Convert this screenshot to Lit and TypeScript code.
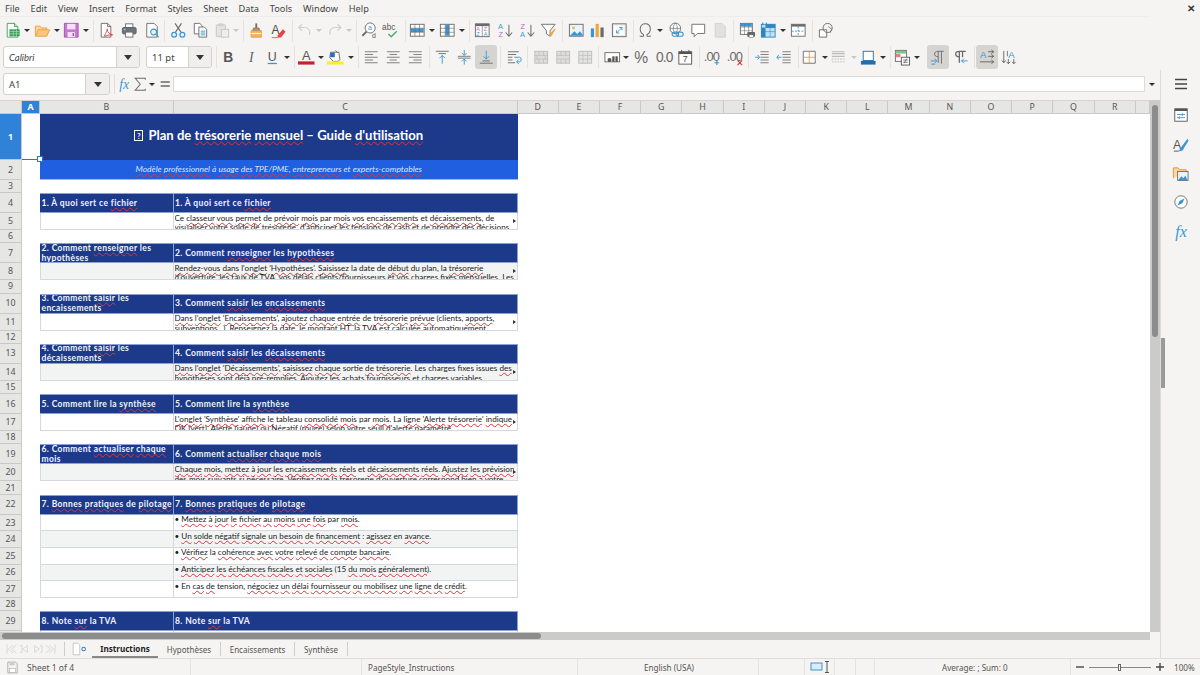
import { LitElement, html, css, svg } from "lit";
import { customElement } from "lit/decorators.js";

const B = "#3a96d6", G = "#6a6a6a", L = "#c4c4c4", O = "#e8923a", R = "#d9342b", P = "#c45fc4";

const I: Record<string, unknown> = {
  new: svg`<path d="M3.500 1.500h8l3.500 3.500v11.500h-11.500z" fill="#fff" stroke="#43a05a"/><path d="M11.500 1.500v3.500h3.500" fill="#cfe8d4" stroke="#43a05a"/><rect x="6" y="8" width="11" height="7.500" fill="#2f9a50"/><path d="M6 10.500h11M6 13h11M10 8v7.500M13.500 8v7.500" stroke="#bfe6c9" stroke-width=".7"/>`,
  open: svg`<path d="M1.500 14.500V4.500h5l1.500 2h6v2" fill="#fbd79c" stroke="#e8a043"/><path d="M1.500 15.500l3-7h12.500l-3 7z" fill="#fcc77b" stroke="#e8a043"/>`,
  save: svg`<path d="M1.500 1.500h15v15h-15z" fill="#c77bd0" stroke="#a94db4"/><rect x="4.500" y="2" width="9" height="6" fill="#f3e2f5"/><rect x="5" y="11" width="8" height="5.500" fill="#f3e2f5"/><rect x="10.500" y="12" width="1.500" height="3.500" fill="#a94db4"/>`,
  pdf: svg`<path d="M3.500 1.500h7l3.500 3.500v11.500h-10.500z" fill="#fff" stroke="${G}"/><path d="M10.500 1.500v3.500h3.500" fill="none" stroke="${G}"/><path d="M7 15.500c2-5 3-6 3-8 0 4 3 6 6 6.500-3 0-6 .5-9 1.500z" fill="none" stroke="${R}" stroke-width=".9"/>`,
  print: svg`<rect x="5" y="2" width="8" height="4" fill="#fff" stroke="${G}"/><rect x="1.500" y="6" width="15" height="7" rx="1.500" fill="#6d7378" stroke="#5b6166"/><rect x="5" y="11" width="8" height="5.500" fill="#fff" stroke="${G}"/><rect x="3" y="7.500" width="2" height="1" fill="#cfe3f3"/>`,
  prev: svg`<path d="M3 1.500h8l3.500 3.500v11.500h-11.500z" fill="#fff" stroke="${G}"/><circle cx="10.500" cy="11" r="3.200" fill="#e3f1fb" stroke="${B}" stroke-width="1.200"/><path d="M13 13.500l3 3" stroke="${B}" stroke-width="1.500"/>`,
  cut: svg`<path d="M6 11L12.500 1.500M12 11L5.500 1.500" stroke="${G}" stroke-width="1.200"/><circle cx="4.500" cy="14" r="2.600" fill="none" stroke="${B}" stroke-width="1.400"/><circle cx="13.500" cy="14" r="2.600" fill="none" stroke="${B}" stroke-width="1.400"/>`,
  copy: svg`<path d="M2.500 1.500h6l2.500 2.500v9h-8.500z" fill="#fff" stroke="${G}"/><path d="M7.500 5.500h6l2.500 2.500v8.500h-8.500z" fill="#fff" stroke="${G}"/><path d="M9.500 10h5M9.500 12h5M9.500 14h5" stroke="${B}"/>`,
  paste: svg`<rect x="2.500" y="3" width="10" height="13" rx="1" fill="#e4e4e4" stroke="${L}"/><rect x="5" y="1.500" width="5" height="3" fill="#cfcfcf"/><rect x="8" y="8" width="8" height="8.500" fill="#eee" stroke="${L}"/>`,
  clone: svg`<path d="M8 1.500h2v5h-2z" fill="#8a6a4a"/><path d="M6 6.500h6l1 3H5z" fill="#999" stroke="${G}" stroke-width=".7"/><path d="M3.500 9.500h11v7h-11z" fill="#f8b560" stroke="${O}"/><path d="M3.500 12.500h11" stroke="#fff"/>`,
  clear: svg`<text x="1.500" y="13.500" font-size="13" font-family="Liberation Sans" fill="#4a4a4a">A</text><path d="M8 15l6-7 3 2.500-5 6.500H9z" fill="#e8434a"/><path d="M2 17h7" stroke="${B}"/>`,
  undo: svg`<path d="M14.500 14c2-4-1-8-5-8H3M6.500 2.500L3 6l3.500 3.500" fill="none" stroke="#cfcfcf" stroke-width="1.300"/>`,
  redo: svg`<path d="M3.500 14c-2-4 1-8 5-8H15M11.500 2.500L15 6l-3.500 3.500" fill="none" stroke="#cfcfcf" stroke-width="1.300"/>`,
  find: svg`<circle cx="10" cy="6.500" r="5.500" fill="#fff" stroke="${G}"/><path d="M6 10.500L1.500 15" stroke="${G}" stroke-width="2"/><text x="7.500" y="9" font-size="7.500" font-family="Liberation Sans" fill="${B}">a</text><text x="12" y="17" font-size="7.500" font-family="Liberation Sans" fill="#555">d</text>`,
  spell: svg`<text x="-1" y="9" font-size="9" font-family="Liberation Sans" fill="#555">abc</text><path d="M6 13l3 3 6-6" fill="none" stroke="#48a868" stroke-width="1.500"/>`,
  rows: svg`<rect x="1.500" y="2.500" width="15" height="13" fill="#fff" stroke="${G}"/><rect x="2" y="7" width="14" height="4" fill="${B}"/><path d="M1.500 6.800h15M1.500 11.200h15M6.500 2.500v13M11.500 2.500v13" stroke="${G}" stroke-width=".7"/>`,
  cols: svg`<rect x="1.500" y="2.500" width="15" height="13" fill="#fff" stroke="${G}"/><rect x="7" y="3" width="4" height="12" fill="${B}"/><path d="M1.500 6.800h15M1.500 11.200h15M6.800 2.500v13M11.200 2.500v13" stroke="${G}" stroke-width=".7"/>`,
  sort: svg`<rect x="1.500" y="2" width="15" height="14" fill="#fff" stroke="${G}"/><rect x="1.500" y="2" width="15" height="2.500" fill="${G}"/><path d="M9 4v12" stroke="${G}" stroke-width=".7"/><text x="2.500" y="10" font-size="6" font-family="Liberation Sans" fill="${P}">A</text><text x="2.500" y="15.500" font-size="6" font-family="Liberation Sans" fill="${B}">Z</text><text x="10.500" y="10" font-size="6" font-family="Liberation Sans" fill="${P}">Z</text><text x="10.500" y="15.500" font-size="6" font-family="Liberation Sans" fill="${B}">A</text>`,
  az: svg`<text x="1" y="8" font-size="8" font-family="Liberation Sans" fill="${B}">A</text><text x="1.500" y="16.500" font-size="8" font-family="Liberation Sans" fill="${P}">Z</text><path d="M13 3v12M9.500 11.500L13 15.500l3.500-4" fill="none" stroke="${G}" stroke-width="1.100"/>`,
  za: svg`<text x="1.500" y="8" font-size="8" font-family="Liberation Sans" fill="${P}">Z</text><text x="1" y="16.500" font-size="8" font-family="Liberation Sans" fill="${B}">A</text><path d="M13 3v12M9.500 11.500L13 15.500l3.500-4" fill="none" stroke="${G}" stroke-width="1.100"/>`,
  filter: svg`<path d="M1.500 2.500h15l-5.500 7v6l-4-2.500v-3.500z" fill="#fff" stroke="${G}"/><path d="M10 14l6-7 1 1-5 8z" fill="#f0a63c"/>`,
  image: svg`<rect x="1.500" y="2.500" width="15" height="13" fill="#eaf4fb" stroke="${G}"/><circle cx="6" cy="6.500" r="1.500" fill="#f5b83d"/><path d="M2 15l5-5 3 3 3-3 3 4v1z" fill="${B}"/>`,
  chart: svg`<rect x="2" y="7" width="3.500" height="9.500" fill="${B}"/><rect x="7.200" y="2" width="3.500" height="14.500" fill="#f0a63c"/><rect x="12.500" y="6" width="3.500" height="10.500" fill="${G}"/>`,
  pivot: svg`<rect x="1.500" y="2" width="15" height="14" fill="#eee" stroke="${G}"/><rect x="3.500" y="4" width="11" height="10" fill="#fff"/><path d="M6 12l6-6M12 6H9M12 6v3M6 12h3M6 12V9" fill="none" stroke="${B}"/>`,
  omega: svg`<path d="M3 15.500h4v-2c-2-1-3.500-3-3.500-6 0-3.500 2.500-5.500 5.500-5.500s5.500 2 5.500 5.500c0 3-1.500 5-3.500 6v2h4" fill="none" stroke="${G}" stroke-width="1.100"/>`,
  link: svg`<circle cx="8" cy="7" r="5.800" fill="#fff" stroke="${G}"/><path d="M2.500 7h11M8 1.200c-3 3.500-3 8 0 11.500M8 1.200c3 3.500 3 8 0 11.500" fill="none" stroke="${G}" stroke-width=".7"/><rect x="4.500" y="11" width="7" height="4.500" rx="2.200" fill="none" stroke="${B}" stroke-width="1.200"/><rect x="9.500" y="11" width="7" height="4.500" rx="2.200" fill="none" stroke="${B}" stroke-width="1.200"/>`,
  comment: svg`<path d="M2 2.500h14v10H8l-3.500 3.500v-3.500H2z" fill="#fff" stroke="${G}"/>`,
  header: svg`<path d="M3.500 1.500h7.500l3.500 3.500v11.500h-11z" fill="#e0e0e0" stroke="#d2d2d2"/>`,
  parea: svg`<rect x="1.500" y="1.500" width="13" height="12" fill="#fff" stroke="${G}"/><rect x="2" y="2" width="12" height="3" fill="${B}"/><path d="M1.500 5.500h13M1.500 9.500h13M6 1.500v12M10.500 1.500v12" stroke="${G}" stroke-width=".6"/><rect x="9" y="11" width="8.500" height="5" rx="1" fill="#666"/><rect x="11" y="14" width="4.500" height="3" fill="#fff" stroke="#666" stroke-width=".6"/>`,
  freeze: svg`<rect x="1.500" y="2.500" width="15" height="14" fill="#bfe0f5" stroke="#2e86c1"/><rect x="6" y="2.500" width="10.500" height="4" fill="#2e86c1"/><rect x="1.500" y="6" width="4.500" height="10.500" fill="#2e86c1"/><path d="M1.500 10.500h15M11 6v10.500" stroke="#2e86c1" stroke-width=".6"/><path d="M3 .5v3M7 .5v3" stroke="#2e86c1"/>`,
  split: svg`<rect x="1.500" y="2.500" width="15" height="13" fill="#fff" stroke="${G}"/><rect x="1.500" y="2.500" width="15" height="2.500" fill="${G}"/><path d="M2 10h14M9 5v10" stroke="${B}" stroke-dasharray="2 1.500"/>`,
  shapes: svg`<path d="M1.500 8.500h8v8h-8z" fill="#fff" stroke="${G}"/><circle cx="10.500" cy="6.500" r="5" fill="none" stroke="${G}"/><path d="M11 5l4 3-2 4" fill="none" stroke="${G}" stroke-width=".8"/>`,
  bold: svg`<text x="9" y="14.500" text-anchor="middle" font-size="15" font-weight="700" font-family="Liberation Sans" fill="#555">B</text>`,
  ital: svg`<text x="9" y="14.500" text-anchor="middle" font-size="15" font-style="italic" font-family="Liberation Serif" fill="#666">I</text>`,
  und: svg`<text x="9" y="13" text-anchor="middle" font-size="13.500" font-family="Liberation Sans" fill="#555">U</text><path d="M4 15.800h10" stroke="${B}" stroke-width="1.400"/>`,
  fcol: svg`<text x="9" y="12.500" text-anchor="middle" font-size="14" font-family="Liberation Sans" fill="#555">A</text><rect x="0" y="13.500" width="18" height="3.500" fill="#c4232b"/>`,
  bcol: svg`<path d="M4 3.500h9l1 8-2 2H7l-4-4z" fill="#fff" stroke="${G}"/><path d="M3.500 4h5v5h-5z" fill="#2e6fb0"/><path d="M9 1.500l2.500 2.500" stroke="${G}"/><rect x="0" y="13.500" width="18" height="3.500" fill="#f5ee33"/>`,
  aleft: svg`<path d="M2 3h14M2 6h9M2 9h14M2 12h9M2 15h14" stroke="${G}" stroke-width=".9"/>`,
  acenter: svg`<path d="M2 3h14M5 6h8M2 9h14M5 12h8M2 15h14" stroke="${G}" stroke-width=".9"/>`,
  aright: svg`<path d="M2 3h14M7 6h9M2 9h14M7 12h9M2 15h14" stroke="${G}" stroke-width=".9"/>`,
  vtop: svg`<path d="M2 2.500h14M5 5h8" stroke="${G}"/><path d="M9 16V7M6 10l3-3 3 3" fill="none" stroke="${B}"/>`,
  vmid: svg`<path d="M2 8h14M2 10h14" stroke="${G}" stroke-width=".9"/><path d="M9 1v6M6.500 4.500L9 7l2.500-2.500M9 17v-6M6.500 13.500L9 11l2.500 2.500" fill="none" stroke="${B}"/>`,
  vbot: svg`<path d="M2 15.500h14M5 13h8" stroke="${G}"/><path d="M9 2v9M6 8l3 3 3-3" fill="none" stroke="${B}"/>`,
  wrap: svg`<path d="M2 3h12M2 6h9M2 9h5M2 12h5M2 15h8" stroke="${G}"/><path d="M9 9h6c2 0 2 5 0 5h-3M14 11.500L11.500 14l2.500 2.500" fill="none" stroke="${B}"/>`,
  merge: svg`<rect x="2" y="2.500" width="14" height="13" fill="#ddd" stroke="#bdbdbd"/><path d="M2 7h14M2 11h14M6.500 2.500V7M11.500 2.500V7M6.500 11v4.500M11.500 11v4.500M4.500 7v4M13.500 7v4" stroke="#bdbdbd" stroke-width=".8"/>`,
  merge2: svg`<rect x="2" y="2.500" width="14" height="13" fill="#ddd" stroke="#bdbdbd"/><path d="M2 7h14M2 11h14M6.500 2.500V7M11.500 2.500V7M6.500 11v4.500M11.500 11v4.500" stroke="#bdbdbd" stroke-width=".8"/>`,
  merge3: svg`<rect x="2" y="2.500" width="14" height="13" fill="#e4e4e4" stroke="#bdbdbd"/><path d="M2 7h14M2 11h14M6.500 2.500v13M11.500 2.500v13" stroke="#bdbdbd" stroke-width=".8"/>`,
  curr: svg`<rect x="1" y="4" width="16" height="10" fill="#fff" stroke="${G}"/><circle cx="6" cy="12" r="2.200" fill="#555"/><rect x="9" y="8" width="2.500" height="6" fill="#555"/><rect x="12.500" y="8" width="2.500" height="6" fill="#555"/>`,
  pct: svg`<text x="9" y="15" text-anchor="middle" font-size="17" font-family="Liberation Sans" fill="${G}">%</text>`,
  num: svg`<text x="9" y="14.500" text-anchor="middle" font-size="15" letter-spacing="-1" font-family="Liberation Sans" fill="${G}">0.0</text>`,
  date: svg`<rect x="2" y="3" width="14" height="13.500" fill="#fff" stroke="#555"/><rect x="2" y="3" width="14" height="2.500" fill="#555"/><path d="M5 1v3M13 1v3" stroke="#555"/><text x="9" y="14.500" text-anchor="middle" font-size="9.500" font-family="Liberation Sans" fill="#444">7</text>`,
  addd: svg`<text x="8" y="13" text-anchor="middle" font-size="14" letter-spacing="-1" font-family="Liberation Sans" fill="${G}">.00</text><path d="M14 12.500v5M11.500 15h5" stroke="${B}" stroke-width="1.200"/>`,
  deld: svg`<text x="8" y="13" text-anchor="middle" font-size="14" letter-spacing="-1" font-family="Liberation Sans" fill="${G}">.00</text><path d="M11.500 12.500l5 5M16.500 12.500l-5 5" stroke="${R}" stroke-width="1.200"/>`,
  ind: svg`<path d="M7 3h9M7 6h9M7 9h9M7 12h9M7 15h9" stroke="${G}" stroke-width=".9"/><path d="M1 9h5M4 6.500L6 9l-2 2.500" fill="none" stroke="${B}"/>`,
  outd: svg`<path d="M7 3h9M7 6h9M7 9h9M7 12h9M7 15h9" stroke="${G}" stroke-width=".9"/><path d="M1 9h5M3 6.500L1 9l2 2.500" fill="none" stroke="${B}"/>`,
  bord: svg`<path d="M2.500 2.500h13v13h-13z" fill="#fff" stroke="${G}"/><path d="M9 2.500v13M2.500 9h13" stroke="${O}" stroke-width=".9"/>`,
  bstyle: svg`<path d="M2 3h14M2 5h14M2 8h14" stroke="#bdbdbd" stroke-width="1.200"/><path d="M2 11h14M2 14h14" stroke="#bdbdbd" stroke-dasharray="2 1"/>`,
  bcolor: svg`<rect x="3.500" y="2.500" width="11" height="10" fill="#fff" stroke="#1f6fb0"/><rect x="1" y="13" width="16" height="4" fill="#1f6fb0"/>`,
  cond: svg`<rect x="1.500" y="1.500" width="12" height="12" fill="#fff" stroke="${G}"/><rect x="2" y="2" width="11" height="3" fill="#7cc38e"/><rect x="2" y="5.500" width="5" height="3.500" fill="#e87b7b"/><rect x="8" y="9" width="9" height="8.500" fill="#fff" stroke="#555"/><path d="M10 12h5M10 14.500h5M14 10.500l-3 5" stroke="#555" stroke-width=".8"/>`,
  ltr: svg`<path d="M9 15V2.500h6M12.500 2.500V16M9 2.500c-3 0-4 1.500-4 3s1 3 4 3" fill="none" stroke="${G}"/><path d="M1 13h6M5 10.500L7.500 13 5 15.500M1.500 16.500h4" fill="none" stroke="${B}"/>`,
  rtl: svg`<path d="M8 15V2.500h7M11.500 2.500V9M8 2.500c-3 0-4 1.500-4 3s1 3 4 3" fill="none" stroke="${G}" stroke-width="1.400"/><path d="M10 13h7M13 10.500L10.500 13l2.500 2.500" fill="none" stroke="${B}"/>`,
  horiz: svg`<text x="1" y="10" font-size="10.500" font-family="Liberation Sans" fill="${B}">A</text><path d="M10 3h6M13.500 1l2.500 2-2.500 2M10 8h6M13.500 6l2.500 2-2.500 2M1 14h15M13.500 12l2.500 2-2.500 2" fill="none" stroke="#555" stroke-width=".9"/>`,
  vert: svg`<text x="8" y="10" font-size="10.500" font-family="Liberation Sans" fill="${B}">A</text><path d="M3 2v13M1 12.500L3 15l2-2.500M8 11v5M6 14l2 2 2-2M14 11v5M12 14l2 2 2-2" fill="none" stroke="#555" stroke-width=".9"/><path d="M7 2v6" stroke="#555" stroke-width=".8"/>`,
  fx: svg`<text x="9" y="14" text-anchor="middle" font-size="15" font-style="italic" font-family="Liberation Serif" fill="${B}">fx</text>`,
  sum: svg`<path d="M14.500 4V2.500H3.500L9 9l-5.500 6.500h11V14" fill="none" stroke="${G}" stroke-width="1.100"/>`,
  eq: svg`<path d="M4 6.500h10M4 11h10" stroke="${G}" stroke-width="1.700"/>`,
  menu: svg`<path d="M3 4.500h12M3 9h12M3 13.500h12" stroke="#444" stroke-width="1.500"/>`,
  props: svg`<rect x="2" y="2" width="14" height="14" fill="#fff" stroke="#555"/><rect x="2" y="2" width="14" height="2.500" fill="#555"/><path d="M4.500 8.500h9M4.500 12h9" stroke="${B}"/><path d="M10.500 7v3M7 10.500v3" stroke="${B}"/>`,
  styles: svg`<text x="1" y="13.500" font-size="13" font-family="Liberation Sans" fill="#555">A</text><path d="M16.500 3L11 10l-2 3c-.5 2-2 2.500-3 3 3 .5 6 0 6.500-3l5-8z" fill="${B}"/><path d="M2 16h5" stroke="#555"/>`,
  gallery: svg`<path d="M1.500 14V3h5l1.500 2h7v2" fill="#fbd79c" stroke="${O}"/><rect x="6" y="7" width="11" height="9.500" fill="#e7f2fa" stroke="#555" stroke-width=".8"/><path d="M6.500 16l3.500-4 2 2 2-2.500 2.500 4.500z" fill="${B}"/>`,
  nav: svg`<circle cx="9" cy="9" r="7" fill="#fff" stroke="${G}"/><path d="M13 5L10.500 10.500 5 13 7.500 7.500z" fill="${B}"/>`,
  fxs: svg`<text x="9" y="14.500" text-anchor="middle" font-size="16" font-style="italic" font-family="Liberation Serif" fill="${B}">fx</text>`,
  sv: svg`<path d="M2.500 1.500h11l2 2v13h-13z" fill="#f4f4f4" stroke="#999"/><rect x="5" y="2" width="7" height="4" fill="#ccc"/><rect x="5" y="10" width="8" height="6" fill="#fff" stroke="#999" stroke-width=".7"/>`,
  addsheet: svg`<path d="M1.500 1.500h6l2.500 2.500v12.500h-8.500z" fill="#fff" stroke="#bbb"/><circle cx="15" cy="9" r="2.300" fill="none" stroke="#3a7fc8" stroke-width="1.300"/>`,
  nava: svg`<path d="M3 2v14M12 3l-7 6 7 6M17 3l-7 6 7 6" fill="none" stroke="#ccc"/>`,
  navb: svg`<path d="M3 4h3v10H3M14 4L7 9l7 5z" fill="none" stroke="#ccc"/>`,
  navc: svg`<path d="M4 4l7 5-7 5z M12 4h3v10h-3" fill="none" stroke="#ccc"/>`,
  navd: svg`<path d="M15 2v14M6 3l7 6-7 6M1 3l7 6-7 6" fill="none" stroke="#ccc"/>`,
};

type It = [number, string, number?];
const T1: It[] = [[12,"new"],[27,"a"],[42,"open"],[57,"a"],[71,"save"],[86,"a"],[93,"s"],[106,"pdf"],[129,"print"],[152,"prev"],[164,"s"],[178,"cut"],[200,"copy"],[222,"paste"],[236,"d"],[243,"s"],[256,"clone"],[278,"clear"],[292,"s"],[304,"undo"],[319,"d"],[335,"redo"],[349,"d"],[356,"s"],[369,"find"],[391,"spell"],[405,"s"],[417,"rows"],[432,"a"],[447,"cols"],[462,"a"],[469,"s"],[482,"sort"],[505,"az"],[527,"za"],[548,"filter"],[562,"s"],[576,"image"],[597,"chart"],[619,"pivot"],[633,"s"],[645,"omega"],[660,"a"],[676,"link"],[698,"comment"],[720,"header"],[733,"s"],[747,"parea"],[768,"freeze"],[783,"a"],[798,"split"],[812,"s"],[826,"shapes"]];
const T2: It[] = [[216,"s"],[228,"bold"],[251,"ital"],[272,"und"],[287,"a"],[294,"s"],[306,"fcol"],[321,"a"],[335,"bcol"],[351,"a"],[358,"s"],[371,"aleft"],[393,"acenter"],[415,"aright"],[429,"s"],[442,"vtop"],[464,"vmid"],[486,"vbot",1],[500,"s"],[514,"wrap"],[527,"s"],[541,"merge"],[563,"merge2"],[585,"merge3"],[598,"s"],[612,"curr"],[626,"a"],[641,"pct"],[664,"num"],[685,"date"],[699,"s"],[712,"addd"],[735,"deld"],[748,"s"],[762,"ind"],[784,"outd"],[798,"s"],[809,"bord"],[825,"a"],[838,"bstyle"],[854,"d"],[868,"bcolor"],[883,"a"],[890,"s"],[902,"cond"],[917,"a"],[927,"s"],[938,"ltr",1],[960,"rtl"],[974,"s"],[987,"horiz",1],[1009,"vert"]];
const COLS = ["D","E","F","G","H","I","J","K","L","M","N","O","P","Q","R"];
const MENU = ["File","Edit","View","Insert","Format","Styles","Sheet","Data","Tools","Window","Help"];
const icon = (n: string, s = 16.5) => html`<svg width=${s} height=${s} viewBox="0 0 18 18">${I[n]}</svg>`;
const caret = html`<i class="caret"></i>`;

/* [bracketed] words get the spell-check squiggle */
const sp = (t: string) => t.split(/\[(.*?)\]/).map((p, i) => (i % 2 ? html`<span class="sp">${p}</span>` : p));

type Row = { h: number; k?: string; b?: string; c?: string | string[]; alt?: boolean; more?: boolean };
const head = (b: string, c: string): Row => ({ h: 20, k: "hd", b, c });
const body = (l: string[], alt: boolean): Row => ({ h: 17, k: "bd", c: l, alt, more: true });
const gap: Row = { h: 13.3 };
const bul = (t: string, alt: boolean): Row => ({ h: 16.6, k: "bd", c: [t], alt });
const ROWS: Row[] = [
  { h: 46, k: "title" }, { h: 20, k: "sub" }, { h: 13 },
  head("1. À quoi sert ce [fichier]", "1. À quoi sert ce [fichier]"),
  body(["Ce [classeur] [vous] [permet] de [prévoir] [mois] par [mois] [vos] [encaissements] et [décaissements], de", "[visualiser] [votre] [solde] de [trésorerie], d'[anticiper] les [tensions] de cash et de [prendre] des [décisions]"], false), gap,
  head("2. Comment [renseigner] les [hypothèses]", "2. Comment [renseigner] les [hypothèses]"),
  body(["[Rendez-vous] [dans] [l'onglet] '[Hypothèses]'. [Saisissez] la date de [début] du plan, la [trésorerie]", "d'ouverture, les taux de TVA, [vos] [délais] clients/fournisseurs et [vos] charges fixes mensuelles. Les"], true), gap,
  head("3. Comment [saisir] les [encaissements]", "3. Comment [saisir] les [encaissements]"),
  body(["[Dans] [l'onglet] '[Encaissements]', [ajoutez] [chaque] [entrée] de [trésorerie] [prévue] (clients, [apports],", "subventions...). [Renseignez] la date, le montant HT, la TVA est calculée automatiquement."], false), gap,
  head("4. Comment [saisir] les [décaissements]", "4. Comment [saisir] les [décaissements]"),
  body(["[Dans] [l'onglet] '[Décaissements]', [saisissez] [chaque] sortie [de] [trésorerie]. Les charges fixes issues [des]", "hypothèses sont déjà pré-remplies. Ajoutez les achats fournisseurs et charges variables."], true), gap,
  head("5. Comment lire la [synthèse]", "5. Comment lire la [synthèse]"),
  body(["[L'onglet] '[Synthèse]' [affiche] [le] tableau [consolidé] [mois] par [mois]. La [ligne] '[Alerte] [trésorerie]' [indique]", "OK (vert), Alerte (jaune) ou Négatif (rouge) selon votre seuil d'alerte paramétré."], false), gap,
  head("6. Comment [actualiser] [chaque] [mois]", "6. Comment [actualiser] [chaque] [mois]"),
  body(["[Chaque] [mois], [mettez] [à] [jour] [les] [encaissements] [réels] et [décaissements] [réels]. [Ajustez] [les] [prévisions]", "des mois suivants si nécessaire. Vérifiez que la trésorerie d'ouverture correspond bien à votre"], true), gap,
  head("7. [Bonnes] [pratiques] de [pilotage]", "7. [Bonnes] [pratiques] de [pilotage]"),
  bul("• [Mettez] [à] [jour] [le] [fichier] [au] [moins] [une] [fois] par [mois].", false),
  bul("• [Un] [solde] [négatif] [signale] [un] [besoin] [de] [financement] : [agissez] en [avance].", true),
  bul("• [Vérifiez] la [cohérence] [avec] [votre] [relevé] [de] [compte] [bancaire].", false),
  bul("• [Anticipez] [les] [échéances] [fiscales] [et] [sociales] (15 [du] [mois] [généralement]).", true),
  bul("• En [cas] [de] tension, [négociez] [un] [délai] [fournisseur] [ou] [mobilisez] [une] [ligne] [de] [crédit].", false),
  gap,
  head("8. Note [sur] la TVA", "8. Note [sur] la TVA"),
  { h: 20, k: "bd", c: [""], alt: false },
];

@customElement("app-root")
export class AppRoot extends LitElement {
  static styles = css`
    :host { display: block; width: 1200px; height: 675px; overflow: hidden; background: #f5f4f2;
      font-family: "Noto Sans", sans-serif; color: #3c3c3c; }
    .app { display: flex; flex-direction: column; height: 675px; }
    .menu { display: flex; align-items: center; height: 16px; padding: 0 4px 0 5px; gap: 10.9px; font-size: 9.2px; color: #444; flex: none; }
    .close { margin-left: auto; font-size: 10px; font-weight: 700; padding-right: 1px; color: #333; }
    .tb { display: flex; align-items: center; flex: none; }
    .t1 { height: 28px; border-top: 1px solid #eeedeb; width: 1150px; box-sizing: border-box; }
    .t2 { height: 26px; width: 1100px; }
    .it { flex: none; display: flex; align-items: center; justify-content: center; height: 18px; position: relative; }
    .it svg { display: block; flex: none; overflow: visible; }
    .hl::before { content: ""; position: absolute; left: -2px; right: -2px; top: -3px; bottom: -3px; background: #d6d4d0; border-radius: 3px; }
    .hl svg { position: relative; }
    .sep { flex: none; width: 1px; height: 22px; background: #e4e3e0; }
    .caret { display: block; width: 0; height: 0; border: 3px solid transparent; border-top: 3.5px solid #333; border-bottom: 0; }
    .dim .caret { border-top-color: #c8c8c8; }
    .combo { flex: none; height: 22px; box-sizing: border-box; display: flex; background: #fff; border: 1px solid #d2d1ce;
      border-radius: 3px; font-size: 9.5px; color: #444; overflow: hidden; }
    .combo b { flex: 1; font-weight: 400; display: flex; align-items: center; padding-left: 5px; }
    .combo u { flex: none; width: 22px; background: #efeeec; border-left: 1px solid #d2d1ce; display: flex; align-items: center; justify-content: center; }
    .combo u .caret { border-width: 4px; border-top-width: 5px; border-bottom: 0; }
    .fontn { width: 137px; margin-left: 3px; font-style: italic; font-family: "Lato", sans-serif; }
    .fonts { width: 66px; margin-left: 6px; }
    .body { flex: 1; display: flex; min-height: 0; }
    .left { flex: none; width: 1161px; display: flex; flex-direction: column; border-right: 1px solid #dedddb; box-sizing: border-box; }
    .fbar { height: 30px; padding-bottom: 2px; box-sizing: border-box; flex: none; display: flex; align-items: center; }
    .name { width: 107px; margin-left: 3px; }
    .name u { width: 23px; }
    .fsep { width: 1px; height: 20px; background: #dedddb; margin-left: 4px; }
    .fx, .sum, .eq { width: 18px; }
    .sum { margin-left: -2px; }
    .cr { width: 7px; margin-left: -0.5px; }
    .eq { margin-left: .5px; }
    .input { flex: none; width: 972px; height: 16px; margin-left: -1px; background: #fff; border: 1px solid #dcdbd8; box-sizing: border-box; }
    .cr2 { width: 7px; margin-left: 3.5px; }
    .sheetwrap { flex: 1; min-height: 0; display: flex; }
    .sheet { flex: none; width: 1150px; overflow: hidden; display: grid; align-content: start; background: #fff;
      grid-template-columns: 22px 18px 133.5px 344px repeat(15, 41.22px) 1fr; }
    .ch, .rh { background: #e6e6e4; color: #555; font-size: 8.8px; display: flex; align-items: center; justify-content: center;
      border-right: 1px solid #c9c9c7; border-bottom: 1px solid #c9c9c7; box-sizing: border-box; overflow: hidden; }
    .ch { height: 14px; border-top: 1px solid #d4d4d2; }
    .on { background: #2f82d8; color: #fff; font-weight: 700; }
    .a1 { position: relative; grid-column: 2; background: #fff; border-bottom: 1.5px solid #2f74c8; box-sizing: border-box; }
    .a1::after { content: ""; position: absolute; right: -3px; bottom: -3px; width: 4px; height: 4px; background: #fff; border: 1px solid #2f74c8; z-index: 2; }
    .title { grid-column: 3 / 5; background: #1d3a8a; color: #fff; font: 700 13.1px "Lato", sans-serif; display: flex; align-items: center; justify-content: center; gap: 5px; padding-bottom: 4px; box-sizing: border-box; }
    .title i { font-style: normal; font-size: 7px; border: 1px solid #fff; width: 7px; height: 9px; display: flex; align-items: center; justify-content: center; margin-top: 1px; }
    .subt { grid-column: 3 / 5; background: #1f5fe0; color: #dbe6ff; font: italic 8.5px "Lato", sans-serif; display: flex; align-items: center; justify-content: center; border-bottom: 1px solid #9db8ef; padding-bottom: 1px; box-sizing: border-box; }
    .cell { box-sizing: border-box; overflow: hidden; position: relative; min-width: 0; }
    .hd { background: #1d3a8a; color: #f2f5ff; font: 700 8.5px/9.9px "Lato", sans-serif; letter-spacing: .38px; display: flex; align-items: center; padding: 1px 0 0 1.5px;
      border: 1px solid #8aa2d8; border-width: 1px 1px 1px 0; }
    .bd { background: #fff; color: #222; font: 8.15px/9.6px "Lato", sans-serif; padding: .5px 0 0 1px; border-bottom: 1px solid #d5d9dd; border-right: 1px solid #d5d9dd; }
    .b { border-left: 1px solid #d5d9dd; }
    .ln { white-space: nowrap; overflow: hidden; margin: 0 3px -2.5px 0; padding-bottom: 2.5px; }
    .alt { background: #f2f4f4; }
    .more { position: absolute; right: 1px; top: 6px; width: 0; height: 0; border: 2.2px solid transparent; border-left: 3px solid #333; border-right: 0; }
    .sp { text-decoration: underline wavy #e0333a .7px; text-underline-offset: .6px; text-decoration-skip-ink: none; }
    .vs { flex: none; width: 10px; background: #cbcbc9; }
    .vt { margin: 5px 2px 0; height: 232px; background: #8c8c8c; border-radius: 3px; }
    .hs { height: 8px; flex: none; background: #cbcbc9; width: 1150px; display: flex; align-items: center; padding: 0 2px; box-sizing: border-box; }
    .hs div { width: 539px; height: 6px; background: #8c8c8c; border-radius: 3px; }
    .tabs { height: 18px; flex: none; display: flex; align-items: center; font-size: 8px; color: #555; }
    .navs { display: flex; margin-left: 5px; width: 52px; justify-content: space-between; }
    .navs svg { display: block; }
    .tsep { width: 1px; height: 14px; background: #ccc; }
    .navsep { margin-left: 7px; }
    .add { width: 18px; margin-left: 5px; }
    .tab { height: 18px; display: flex; align-items: center; box-sizing: border-box; }
    .tab.act { color: #222; font-weight: 700; font-size: 8.15px; width: 66px; justify-content: center; border-bottom: 2px solid #888; margin-left: 4px; }
    .tab.n { padding: 0 8.8px; }
    .side { flex: 1; display: flex; flex-direction: column; align-items: center; gap: 11px; padding-top: 5px; position: relative; }
    .side .h { margin-bottom: 2px; }
    .grip { position: absolute; left: 0; top: 268px; width: 4px; height: 50px; background: #9a9a9a; }
    .status { height: 17px; flex: none; display: flex; align-items: center; border-top: 1px solid #dedddb; font-size: 8.1px; color: #555; box-sizing: border-box; }
    .st { height: 100%; display: flex; align-items: center; box-sizing: border-box; border-right: 1px solid #e4e3e0; flex: none; }
    .s1 { width: 191px; padding-left: 6px; gap: 8px; font-size: 8.5px; }
    .s2 { width: 171px; }
    .s3 { width: 216px; padding-left: 6px; }
    .s4 { width: 181px; padding-left: 66px; }
    .s5 { width: 46px; }
    .s6 { width: 30px; padding-left: 5px; }
    .s7 { width: 21px; }
    .s8 { width: 19px; }
    .s9 { width: 196px; padding-left: 67px; }
    .zoom { display: flex; align-items: center; flex: none; margin-left: 4px; }
    .zt { position: relative; width: 62px; height: 1px; background: #888; margin: 0 4px; }
    .zk { position: absolute; left: 29px; top: -3px; width: 3px; height: 7px; background: #f5f4f2; border: 1px solid #666; box-sizing: border-box; }
    .pc { margin-left: 9px; }
  `;

  private items(list: It[], from = 0) {
    let right = from;
    const out = [] as unknown[];
    for (const [cx, n, hl] of list) {
      const w = n === "a" || n === "d" ? 7 : n === "s" ? 1 : 18;
      const ml = cx - w / 2 - right;
      right = cx + w / 2;
      const st = `margin-left:${ml}px;width:${w}px`;
      if (n === "s") out.push(html`<div class="sep" style=${st}></div>`);
      else if (n === "a" || n === "d") out.push(html`<div class="it ${n === "d" ? "dim" : ""}" style=${st}>${caret}</div>`);
      else out.push(html`<div class="it ${hl ? "hl" : ""}" style=${st}>${icon(n)}</div>`);
    }
    return out;
  }

  private grid() {
    const out = [] as unknown[];
    ROWS.forEach((r, i) => {
      const n = i + 1;
      out.push(html`<div class="rh ${n === 1 ? "on" : ""}" style="grid-column:1">${n}</div>`);
      if (r.k === "title") {
        out.push(html`<div class="a1"></div><div class="title"><i>?</i><span>${sp("Plan de [trésorerie] [mensuel] – Guide [d'utilisation]")}</span></div>`);
      } else if (r.k === "sub") {
        out.push(html`<div class="subt"><span>${sp("[Modèle] [professionnel] à [usage] [des] [TPE/PME], [entrepreneurs] et [experts-comptables]")}</span></div>`);
      } else if (r.k === "hd") {
        out.push(html`<div class="cell hd" style="grid-column:3"><span>${sp(r.b!)}</span></div><div class="cell hd" style="grid-column:4"><span>${sp(r.c as string)}</span></div>`);
      } else if (r.k === "bd") {
        const a = r.alt ? "alt" : "";
        out.push(html`<div class="cell bd b ${a}" style="grid-column:3"></div><div class="cell bd ${a}" style="grid-column:4">${(r.c as string[]).map((l) => html`<div class="ln">${sp(l)}</div>`)}${r.more ? html`<i class="more"></i>` : ""}</div>`);
      }
    });
    return out;
  }

  render() {
    const rows = `grid-template-rows:14px ${ROWS.map((r) => r.h + "px").join(" ")}`;
    return html`<div class="app">
      <div class="menu">${MENU.map((m) => html`<span>${m}</span>`)}<span class="close">✕</span></div>
      <div class="tb t1">${this.items(T1)}</div>
      <div class="tb t2">
        <div class="combo fontn"><b>Calibri</b><u>${caret}</u></div>
        <div class="combo fonts"><b>11 pt</b><u>${caret}</u></div>
        ${this.items(T2, 212)}
      </div>
      <div class="body">
        <div class="left">
          <div class="fbar">
            <div class="combo name"><b>A1</b><u>${caret}</u></div>
            <div class="fsep"></div>
            <div class="it fx">${icon("fx")}</div>
            <div class="it sum">${icon("sum")}</div>
            <div class="it cr">${caret}</div>
            <div class="it eq">${icon("eq")}</div>
            <div class="input"></div>
            <div class="it cr2">${caret}</div>
          </div>
          <div class="sheetwrap">
            <div class="sheet" style=${rows}>
              <div class="ch"></div>
              <div class="ch on">A</div><div class="ch">B</div><div class="ch">C</div>
              ${COLS.map((c) => html`<div class="ch">${c}</div>`)}
              <div class="ch"></div>
              ${this.grid()}
            </div>
            <div class="vs"><div class="vt"></div></div>
          </div>
          <div class="hs"><div></div></div>
          <div class="tabs">
            <div class="navs">${["nava","navb","navc","navd"].map((n) => icon(n, 12))}</div>
            <div class="tsep navsep"></div>
            <div class="it add">${icon("addsheet", 14)}</div>
            <div class="tab act">Instructions</div>
            <div class="tab n">Hypothèses</div><div class="tsep"></div>
            <div class="tab n">Encaissements</div><div class="tsep"></div>
            <div class="tab n">Synthèse</div><div class="tsep"></div>
          </div>
        </div>
        <div class="side">
          <div class="it h">${icon("menu", 18)}</div>
          <div class="it">${icon("props", 16)}</div>
          <div class="it">${icon("styles", 17)}</div>
          <div class="it">${icon("gallery", 17)}</div>
          <div class="it">${icon("nav", 16)}</div>
          <div class="it">${icon("fxs", 18)}</div>
          <div class="grip"></div>
        </div>
      </div>
      <div class="status">
        <div class="st s1">${icon("sv", 13)}<span>Sheet 1 of 4</span></div>
        <div class="st s2"></div>
        <div class="st s3">PageStyle_Instructions</div>
        <div class="st s4">English (USA)</div>
        <div class="st s5"></div>
        <div class="st s6">
          <svg width="22" height="14" viewBox="0 0 22 14"><rect x="1" y="3" width="11" height="7" fill="#dcebf6" stroke="#3a96d6"/><path d="M15 1.500h4M15 12.500h4M17 1.500v11" stroke="#555" fill="none"/></svg>
        </div>
        <div class="st s7"></div>
        <div class="st s8"></div>
        <div class="st s9">Average: ; Sum: 0</div>
        <div class="zoom">
          <svg width="10" height="10" viewBox="0 0 10 10"><path d="M1 5h8" stroke="#444" stroke-width="1.400"/></svg>
          <div class="zt"><div class="zk"></div></div>
          <svg width="10" height="10" viewBox="0 0 10 10"><path d="M1 5h8M5 1v8" stroke="#444" stroke-width="1.400"/></svg>
          <span class="pc">100%</span>
        </div>
      </div>
    </div>`;
  }
}
